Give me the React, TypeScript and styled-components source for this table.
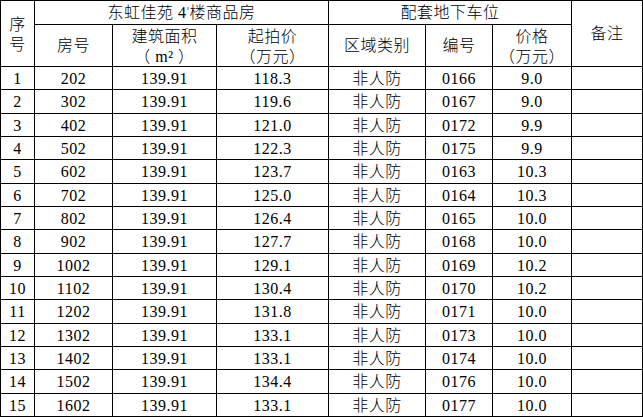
import React from "react";
import styled, { createGlobalStyle } from "styled-components";

const GlobalStyle = createGlobalStyle`
  html, body {
    margin: 0;
    padding: 0;
    background: #ffffff;
  }
  body {
    font-family: "Liberation Serif", "Noto Sans CJK SC", serif;
    font-weight: 300;
    color: #000000;
  }
`;

type Row = {
  no: string;
  room: string;
  area: string;
  price: string;
  zone: string;
  code: string;
  parking: string;
};

const rows: Row[] = [
  { no: "1", room: "202", area: "139.91", price: "118.3", zone: "非人防", code: "0166", parking: "9.0" },
  { no: "2", room: "302", area: "139.91", price: "119.6", zone: "非人防", code: "0167", parking: "9.0" },
  { no: "3", room: "402", area: "139.91", price: "121.0", zone: "非人防", code: "0172", parking: "9.9" },
  { no: "4", room: "502", area: "139.91", price: "122.3", zone: "非人防", code: "0175", parking: "9.9" },
  { no: "5", room: "602", area: "139.91", price: "123.7", zone: "非人防", code: "0163", parking: "10.3" },
  { no: "6", room: "702", area: "139.91", price: "125.0", zone: "非人防", code: "0164", parking: "10.3" },
  { no: "7", room: "802", area: "139.91", price: "126.4", zone: "非人防", code: "0165", parking: "10.0" },
  { no: "8", room: "902", area: "139.91", price: "127.7", zone: "非人防", code: "0168", parking: "10.0" },
  { no: "9", room: "1002", area: "139.91", price: "129.1", zone: "非人防", code: "0169", parking: "10.2" },
  { no: "10", room: "1102", area: "139.91", price: "130.4", zone: "非人防", code: "0170", parking: "10.2" },
  { no: "11", room: "1202", area: "139.91", price: "131.8", zone: "非人防", code: "0171", parking: "10.0" },
  { no: "12", room: "1302", area: "139.91", price: "133.1", zone: "非人防", code: "0173", parking: "10.0" },
  { no: "13", room: "1402", area: "139.91", price: "133.1", zone: "非人防", code: "0174", parking: "10.0" },
  { no: "14", room: "1502", area: "139.91", price: "134.4", zone: "非人防", code: "0176", parking: "10.0" },
  { no: "15", room: "1602", area: "139.91", price: "133.1", zone: "非人防", code: "0177", parking: "10.0" },
];

// row heights follow the uneven 23/24px pitch of the sheet
const dataHeights = rows.map((_, i) => (i % 3 === 1 ? 24 : 23));

const Sheet = styled.div<{ $rows: string }>`
  display: grid;
  grid-template-columns: 34px 78px 104px 112px 97px 67px 79px 71px;
  grid-template-rows: ${(p) => p.$rows};
  width: max-content;
  border-top: 1px solid #000;
  border-left: 1px solid #000;
  font-size: 16px;
`;

const Cell = styled.div<{ $col?: string; $row?: string }>`
  box-sizing: border-box;
  display: flex;
  align-items: center;
  justify-content: center;
  text-align: center;
  border-right: 1px solid #000;
  border-bottom: 1px solid #000;
  line-height: 20px;
  padding-top: 1px;
  letter-spacing: 0.5px;
  grid-column: ${(p) => p.$col ?? "auto"};
  grid-row: ${(p) => p.$row ?? "auto"};
  white-space: nowrap;
`;

const Stack = styled.span`
  display: flex;
  flex-direction: column;
  align-items: center;
  line-height: 20px;
  padding-top: 2px;
`;

const Mark = styled.span`
  display: inline-block;
  width: 2px;
  height: 3px;
  margin: 0 1px 9px 0;
  background: #9bb7e0;
`;

export default function App() {
  const template = ["24px", "42px", ...dataHeights.map((h) => `${h}px`)].join(" ");

  return (
    <>
      <GlobalStyle />
      <Sheet $rows={template}>
        <Cell $col="1" $row="1 / span 2">
          <Stack>
            <span>序</span>
            <span>号</span>
          </Stack>
        </Cell>
        <Cell $col="2 / span 3" $row="1">
          东虹佳苑 4<Mark />楼商品房
        </Cell>
        <Cell $col="5 / span 3" $row="1">
          配套地下车位
        </Cell>
        <Cell $col="8" $row="1 / span 2">
          备注
        </Cell>

        <Cell $col="2" $row="2">房号</Cell>
        <Cell $col="3" $row="2">
          <Stack>
            <span>建筑面积</span>
            <span>（ m² ）</span>
          </Stack>
        </Cell>
        <Cell $col="4" $row="2">
          <Stack>
            <span>起拍价</span>
            <span>（万元）</span>
          </Stack>
        </Cell>
        <Cell $col="5" $row="2">区域类别</Cell>
        <Cell $col="6" $row="2">编号</Cell>
        <Cell $col="7" $row="2">
          <Stack>
            <span>价格</span>
            <span>（万元）</span>
          </Stack>
        </Cell>

        {rows.map((r) => (
          <React.Fragment key={r.no}>
            <Cell>{r.no}</Cell>
            <Cell>{r.room}</Cell>
            <Cell>{r.area}</Cell>
            <Cell>{r.price}</Cell>
            <Cell>{r.zone}</Cell>
            <Cell>{r.code}</Cell>
            <Cell>{r.parking}</Cell>
            <Cell />
          </React.Fragment>
        ))}
      </Sheet>
    </>
  );
}
